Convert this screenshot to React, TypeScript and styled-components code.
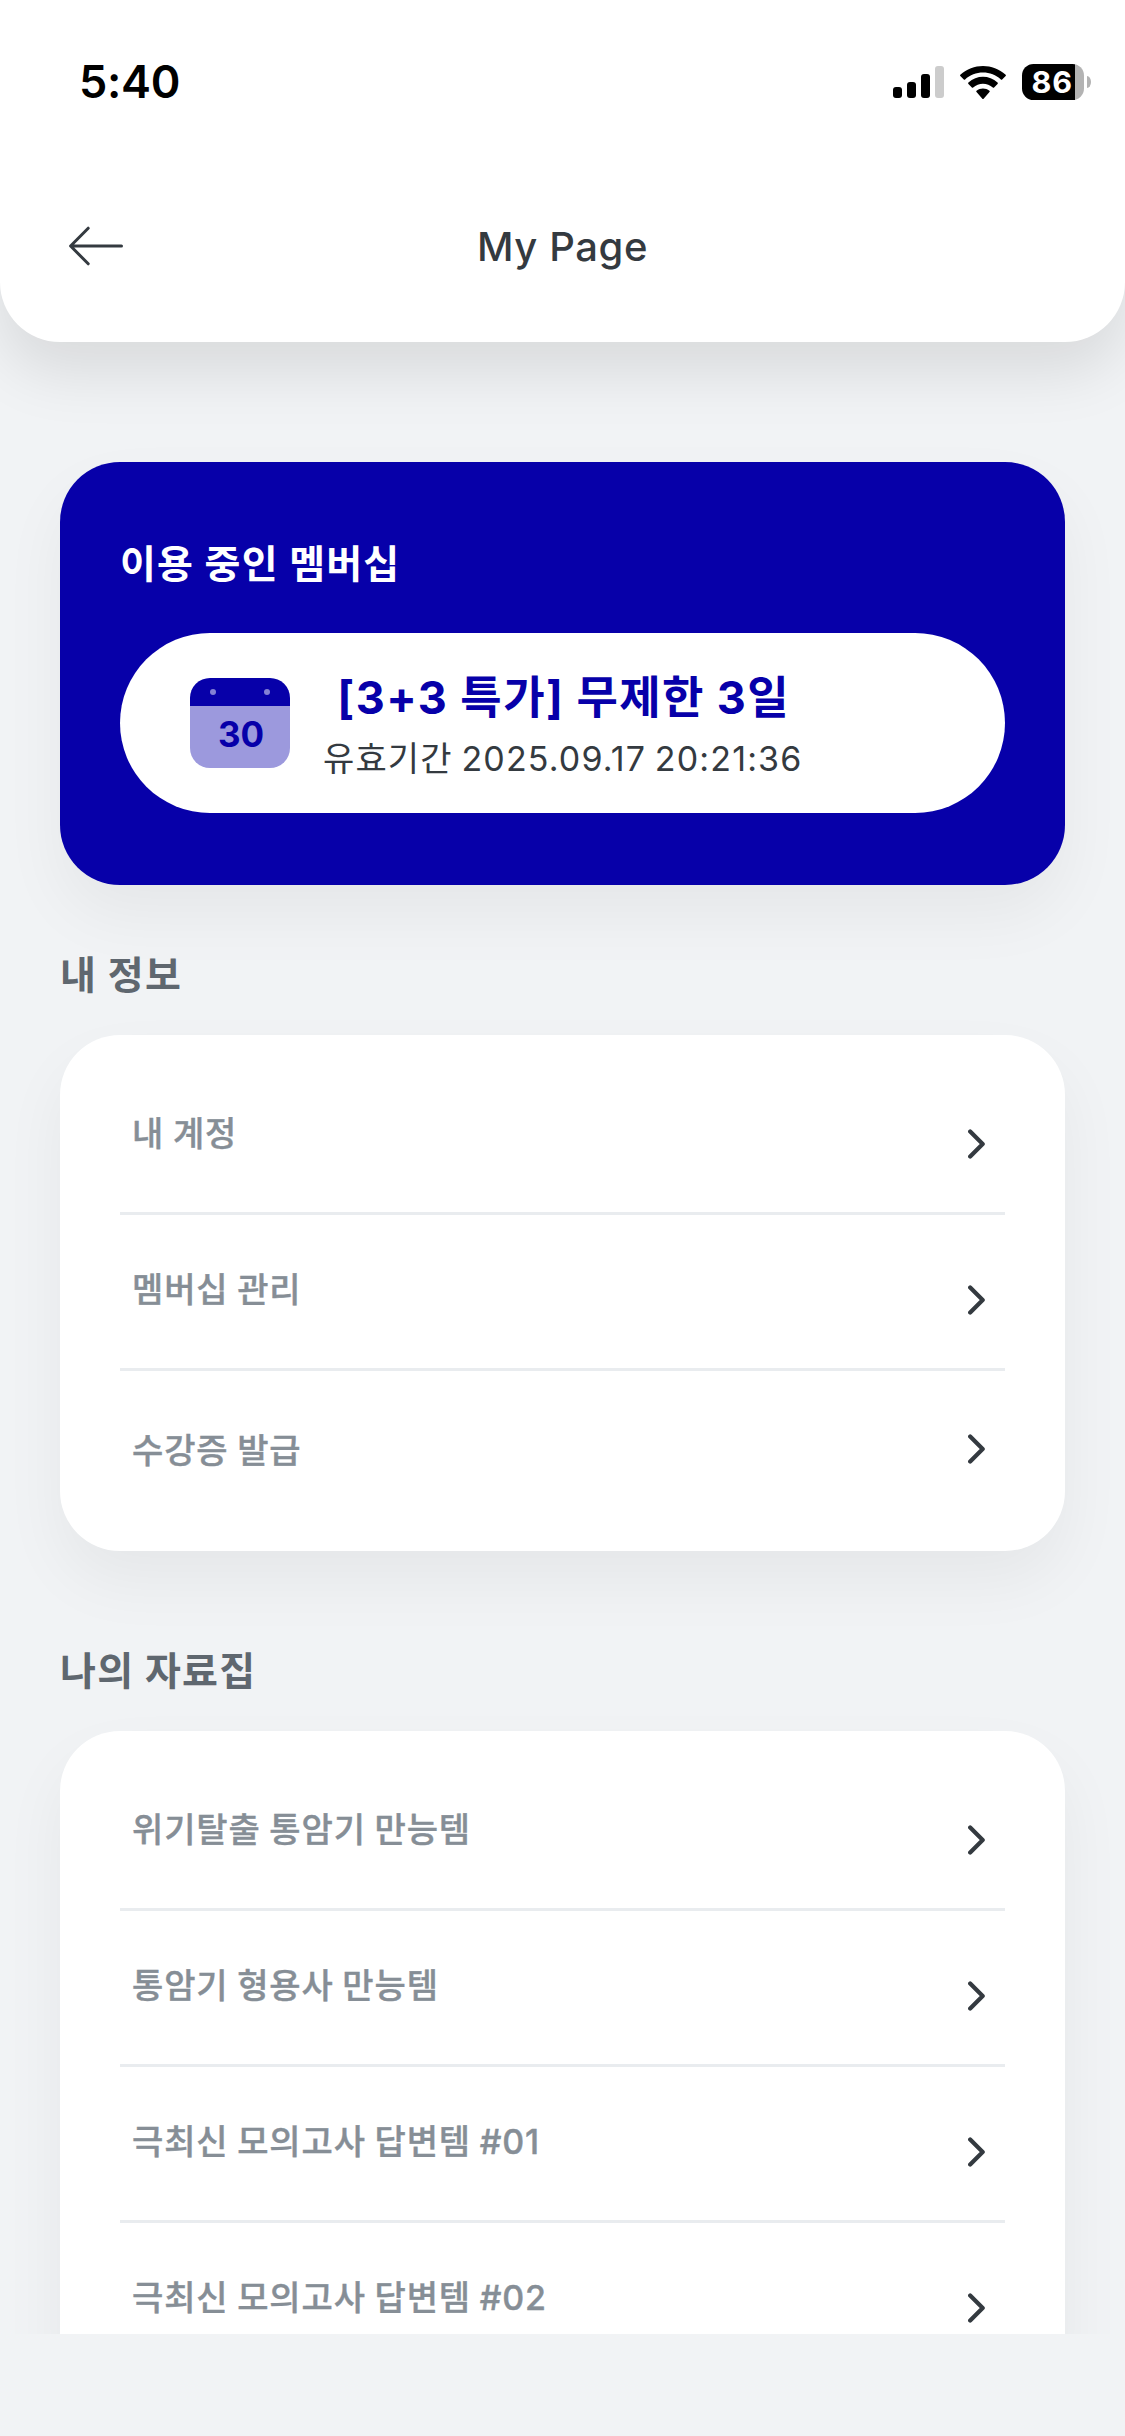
import React from "react";
import styled, { createGlobalStyle } from "styled-components";

const color = {
  page: "#f1f3f5",
  brand: "#0700a9",
  ink: "#343a40",
  heading: "#5f676f",
  label: "#868e96",
  line: "#e9ecef",
  white: "#ffffff",
};

const GlobalStyle = createGlobalStyle`
  * { box-sizing: border-box; }
  body {
    margin: 0;
    background: ${color.page};
    font-family: Inter, "Noto Sans CJK KR", sans-serif;
    color: ${color.ink};
  }
`;

const Screen = styled.div`
  width: 1125px;
  height: 2436px;
  display: flex;
  flex-direction: column;
  background: ${color.page};
  overflow: hidden;
`;

const Viewport = styled.div`
  height: 2334px;
  flex: none;
  overflow: hidden;
`;

const Header = styled.header`
  height: 342px;
  background: ${color.white};
  border-radius: 0 0 60px 60px;
  box-shadow: 0 30px 60px rgba(0, 0, 0, 0.1);
`;

const StatusBar = styled.div`
  height: 164px;
  padding: 0 34px 0 79px;
  display: flex;
  align-items: center;
  justify-content: space-between;
`;

const Time = styled.span`
  font-size: 45px;
  line-height: 54px;
  font-weight: 600;
  letter-spacing: -0.3px;
  color: #000;
`;

const StatusIcons = styled.div`
  display: flex;
  align-items: center;
  gap: 16px;
`;

const SignalBars = styled.div`
  height: 32px;
  display: flex;
  align-items: flex-end;
  gap: 5px;
`;

const SignalBar = styled.span<{ $height: number; $active: boolean }>`
  width: 9px;
  height: ${(p) => p.$height}px;
  border-radius: 3px;
  background: ${(p) => (p.$active ? "#000" : "#ccc")};
`;

const WifiIcon = styled.svg`
  display: block;
  width: 46px;
  height: 33px;
`;

const Battery = styled.div`
  display: flex;
  align-items: center;
  gap: 3px;
`;

const BatteryBody = styled.div`
  width: 62px;
  height: 36px;
  padding-left: 9.5px;
  border-radius: 11.5px;
  background: linear-gradient(to right, #000 53px, #b3b3b3 53px);
  color: ${color.white};
  font-size: 30.5px;
  line-height: 36px;
  font-weight: 700;
  letter-spacing: 0.8px;
`;

const BatteryCap = styled.span`
  width: 4px;
  height: 12px;
  border-radius: 0 4px 4px 0 / 0 6px 6px 0;
  background: #b3b3b3;
`;

const NavBar = styled.nav`
  height: 164px;
  padding: 0 66px;
  display: grid;
  grid-template-columns: 1fr auto 1fr;
  align-items: center;
`;

const BackButton = styled.button`
  justify-self: start;
  display: flex;
  padding: 0;
  border: 0;
  background: none;
  color: ${color.ink};
`;

const PageTitle = styled.h1`
  margin: 2px 0 0;
  font-size: 40px;
  line-height: 52px;
  font-weight: 450;
  letter-spacing: 0.6px;
`;

const Content = styled.main`
  padding: 120px 60px 0;
`;

const shadow = "0 30px 64px rgba(0, 0, 0, 0.05)";

const MembershipCard = styled.section`
  padding: 72px 60px;
  border-radius: 60px;
  background: ${color.brand};
  box-shadow: ${shadow};
`;

const MembershipHeading = styled.h2`
  margin: 0 0 39px;
  font-size: 39px;
  line-height: 60px;
  font-weight: 700;
  letter-spacing: 1.2px;
  color: ${color.white};
`;

const PlanPill = styled.div`
  height: 180px;
  padding-left: 70px;
  display: flex;
  align-items: center;
  gap: 33px;
  border-radius: 90px;
  background: ${color.white};
`;

const Calendar = styled.div`
  width: 100px;
  height: 90px;
  display: flex;
  flex-direction: column;
  border-radius: 20px;
  overflow: hidden;
`;

const CalendarTop = styled.div`
  height: 28px;
  padding: 11px 20px 0;
  display: flex;
  justify-content: space-between;
  background: ${color.brand};
`;

const CalendarRing = styled.span`
  width: 6px;
  height: 6px;
  border-radius: 50%;
  background: rgba(255, 255, 255, 0.5);
`;

const CalendarDay = styled.div`
  flex: 1;
  padding: 0 0 6px 2px;
  display: flex;
  align-items: center;
  justify-content: center;
  background: #9c99dd;
  color: ${color.brand};
  font-size: 35px;
  line-height: 44px;
  font-weight: 700;
`;

const PlanText = styled.div`
  padding-top: 2px;
  display: flex;
  flex-direction: column;
  align-items: center;
  gap: 9px;
  white-space: nowrap;
`;

const PlanName = styled.strong`
  padding-left: 2px;
  font-size: 45px;
  line-height: 60px;
  font-weight: 700;
  letter-spacing: 1.4px;
  color: ${color.brand};
`;

const PlanExpiry = styled.span`
  font-size: 34px;
  line-height: 44px;
  font-weight: 400;
  letter-spacing: 1.15px;
  word-spacing: -2px;
`;

const Section = styled.section<{ $gap: number }>`
  margin-top: ${(p) => p.$gap}px;
`;

const SectionTitle = styled.h2`
  margin: 0 0 30px;
  font-size: 39px;
  line-height: 60px;
  font-weight: 700;
  letter-spacing: 1.3px;
  color: ${color.heading};
`;

const ListCard = styled.ul`
  margin: 0;
  padding: 24px 60px;
  list-style: none;
  border-radius: 60px;
  background: ${color.white};
  box-shadow: ${shadow};
`;

const ListRow = styled.li<{ $last: boolean }>`
  height: 156px;
  padding: ${(p) => (p.$last ? "56px 19px 0 12px" : "51px 19px 0 12px")};
  display: flex;
  align-items: flex-start;
  justify-content: space-between;
  border-bottom: ${(p) => (p.$last ? "0" : `3px solid ${color.line}`)};
`;

const RowLabel = styled.span`
  font-size: 34px;
  line-height: 48px;
  font-weight: 500;
  letter-spacing: 0.87px;
  word-spacing: -1.2px;
  color: ${color.label};
  -webkit-text-stroke: 0.4px ${color.label};
`;

const RowChevron = styled.svg<{ $last: boolean }>`
  flex: none;
  width: 18px;
  height: 30px;
  margin-top: ${(p) => (p.$last ? 7 : 19)}px;
`;

function Chevron({ last }: { last: boolean }) {
  return (
    <RowChevron $last={last} viewBox="0 0 18 30" fill="none">
      <path
        d="M2.2 2.6L14.7 15.1L2.2 27.6"
        stroke={color.ink}
        strokeWidth="4.2"
        strokeLinecap="round"
        strokeLinejoin="round"
      />
    </RowChevron>
  );
}

function MenuSection({ title, items, gap, open }: { title: string; items: string[]; gap: number; open?: boolean }) {
  return (
    <Section $gap={gap}>
      <SectionTitle>{title}</SectionTitle>
      <ListCard>
        {items.map((item, i) => {
          const last = !open && i === items.length - 1;
          return (
            <ListRow key={item} $last={last}>
              <RowLabel>{item}</RowLabel>
              <Chevron last={last} />
            </ListRow>
          );
        })}
      </ListCard>
    </Section>
  );
}

const signal = [11, 16, 24, 32];
const infoItems = ["내 계정", "멤버십 관리", "수강증 발급"];
const materialItems = [
  "위기탈출 통암기 만능템",
  "통암기 형용사 만능템",
  "극최신 모의고사 답변템 #01",
  "극최신 모의고사 답변템 #02",
];

export default function App() {
  return (
    <>
      <GlobalStyle />
      <Screen>
        <Viewport>
          <Header>
            <StatusBar>
              <Time>5:40</Time>
              <StatusIcons>
                <SignalBars>
                  {signal.map((h, i) => (
                    <SignalBar key={h} $height={h} $active={i < 3} />
                  ))}
                </SignalBars>
                <WifiIcon viewBox="0 0 17.15 12.33" fill="#000">
                  <path d="M8.5713 2.46628C11.0584 2.46639 13.4504 3.38847 15.2529 5.04195C15.3887 5.1696 15.6056 5.16799 15.7393 5.03834L17.0368 3.77487C17.1045 3.70911 17.1422 3.62004 17.1417 3.52735C17.1411 3.43467 17.1023 3.34603 17.0338 3.28104C12.3028 -1.09368 4.83907 -1.09368 0.108056 3.28104C0.0395 3.34598 0.0006 3.4346 0 3.52728C-0.0006 3.61996 0.037 3.70906 0.104689 3.77487L1.40255 5.03834C1.53615 5.16819 1.75327 5.1698 1.88893 5.04195C3.69167 3.38836 6.08395 2.46628 8.5713 2.46628Z" />
                  <path d="M8.56795 6.58656C9.92527 6.58647 11.2341 7.09821 12.2403 8.02234C12.3763 8.15347 12.5907 8.15063 12.7234 8.01594L14.0106 6.69684C14.0784 6.62764 14.116 6.53376 14.115 6.43623C14.114 6.33869 14.0746 6.24563 14.0054 6.17786C10.9416 3.28955 6.19688 3.28955 3.13305 6.17786C3.06384 6.24563 3.02435 6.33874 3.02345 6.43633C3.02254 6.53391 3.06031 6.62777 3.12825 6.69684L4.41515 8.01594C4.5478 8.15063 4.76227 8.15347 4.89818 8.02234C5.90375 7.09882 7.21159 6.58713 8.56795 6.58656Z" />
                  <path d="M11.0924 9.48011C11.0943 9.58546 11.0572 9.68703 10.9899 9.76084L8.81327 12.2156C8.74946 12.2877 8.66247 12.3283 8.5717 12.3283C8.48093 12.3283 8.39394 12.2877 8.33013 12.2156L6.15314 9.76084C6.08585 9.68697 6.04883 9.58537 6.05081 9.48002C6.0528 9.37467 6.09361 9.27513 6.16362 9.20489C7.55347 8.2 9.58993 8.2 10.9798 9.20489C11.0498 9.27518 11.0905 9.37476 11.0924 9.48011Z" />
                </WifiIcon>
                <Battery>
                  <BatteryBody>86</BatteryBody>
                  <BatteryCap />
                </Battery>
              </StatusIcons>
            </StatusBar>
            <NavBar>
              <BackButton aria-label="Back">
                <svg width="60" height="44" viewBox="0 0 60 44" fill="none">
                  <path
                    d="M55.5 22H5M22.2 4.2L4.6 22L22.2 39.8"
                    stroke="currentColor"
                    strokeWidth="3"
                    strokeLinecap="round"
                    strokeLinejoin="round"
                  />
                </svg>
              </BackButton>
              <PageTitle>My Page</PageTitle>
            </NavBar>
          </Header>

          <Content>
            <MembershipCard>
              <MembershipHeading>이용 중인 멤버십</MembershipHeading>
              <PlanPill>
                <Calendar>
                  <CalendarTop>
                    <CalendarRing />
                    <CalendarRing />
                  </CalendarTop>
                  <CalendarDay>30</CalendarDay>
                </Calendar>
                <PlanText>
                  <PlanName>[3+3 특가] 무제한 3일</PlanName>
                  <PlanExpiry>유효기간 2025.09.17 20:21:36</PlanExpiry>
                </PlanText>
              </PlanPill>
            </MembershipCard>

            <MenuSection title="내 정보" items={infoItems} gap={60} />
            <MenuSection title="나의 자료집" items={materialItems} gap={90} open />
          </Content>
        </Viewport>
      </Screen>
    </>
  );
}
